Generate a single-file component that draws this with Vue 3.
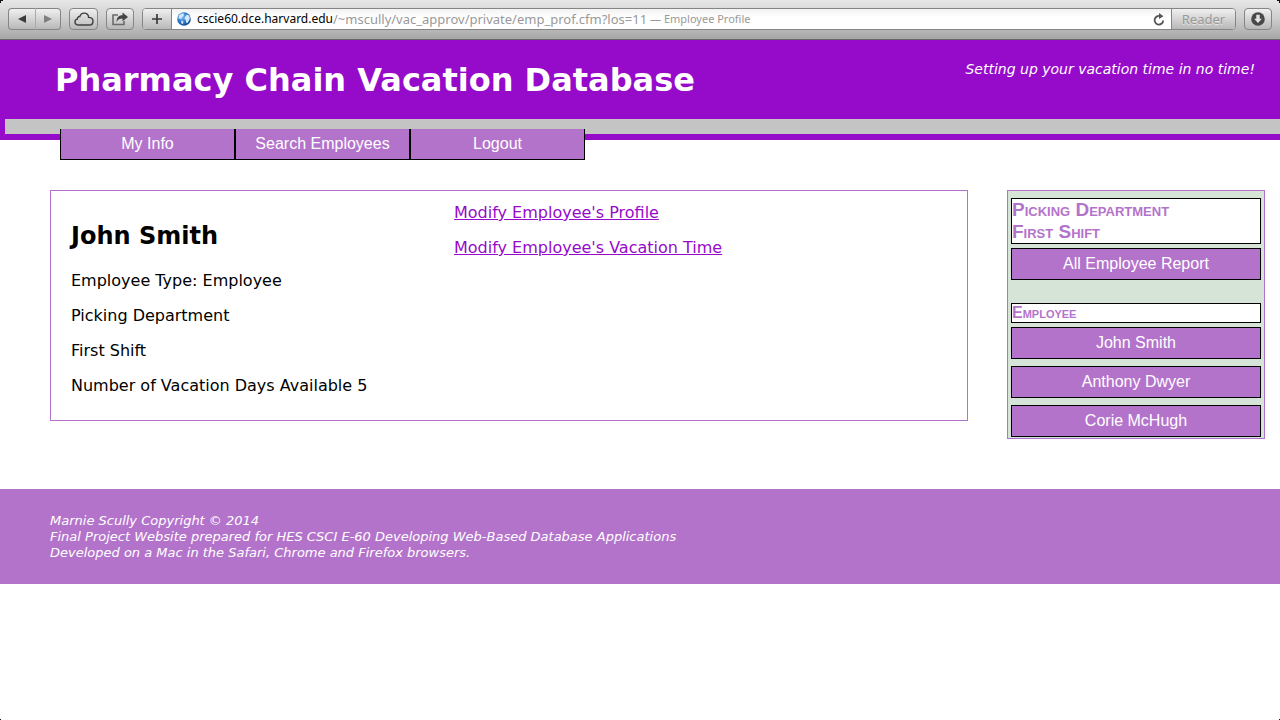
<script setup>
import { ref } from 'vue'

const path = ref('/~mscully/vac_approv/private/emp_prof.cfm?los=11')
const menu = ['My Info', 'Search Employees', 'Logout']
const facts = [
  'Employee Type: Employee',
  'Picking Department',
  'First Shift',
  'Number of Vacation Days Available 5',
]
const actions = ["Modify Employee's Profile", "Modify Employee's Vacation Time"]
const employees = ['John Smith', 'Anthony Dwyer', 'Corie McHugh']
</script>

<template>
  <div class="window">
    <div class="toolbar">
      <div class="group">
        <button class="tool half" type="button" aria-label="Back">
          <svg width="10" height="10" viewBox="0 0 10 10"><path d="M9 1v8L1 5z" fill="#3c3c3c" /></svg>
        </button>
        <button class="tool half" type="button" aria-label="Forward">
          <svg width="10" height="10" viewBox="0 0 10 10"><path d="M1 1v8l8-4z" fill="#7f7f7f" /></svg>
        </button>
      </div>
      <button class="tool single" type="button" aria-label="iCloud tabs">
        <svg width="20" height="14" viewBox="0 0 20 14">
          <path d="M5 13C2.600 13 1 11.800 1 9.900 1 8.200 2.200 7.200 3.400 7.100 3.300 5.400 4.400 4.400 5.800 4.600 6.500 2.400 8 1.100 10 1.100c2.600 0 4.500 1.800 4.600 4.300C17.200 5.400 19 7 19 9.200 19 11.500 17.500 13 15.300 13z" fill="none" stroke="#3f3f3f" stroke-width="1.400" />
        </svg>
      </button>
      <button class="tool narrow" type="button" aria-label="Share">
        <svg width="18" height="14" viewBox="0 0 18 14">
          <path d="M7 3H2v9.500h11V9" fill="none" stroke="#6b6b6b" stroke-width="1.600" />
          <path d="M5.500 10C5.500 5.800 7.500 3.300 11.500 3.300V.5L17 5l-5.500 4.300V6.500C8.500 6.500 6.700 7.500 5.500 10z" fill="#454545" />
        </svg>
      </button>
      <div class="location">
        <button class="tool add" type="button" aria-label="Add bookmark">
          <svg width="12" height="12" viewBox="0 0 12 12"><path d="M6 1v10M1 6h10" stroke="#3a3a3a" stroke-width="1.700" /></svg>
        </button>
        <svg class="globe" width="14" height="14" viewBox="0 0 14 14">
          <defs>
            <radialGradient id="sea" cx=".4" cy=".35" r=".7">
              <stop offset="0" stop-color="#7db9ef" /><stop offset=".6" stop-color="#2b72c4" /><stop offset="1" stop-color="#124487" />
            </radialGradient>
          </defs>
          <circle cx="7" cy="7" r="6.800" fill="url(#sea)" />
          <path d="M2 3.500 4.500 1.500 7 1.800 6.500 4 5 5 4.500 7 3 6.500 1.500 7zM8 5l2-2.500 2 1L13 6l-1 2.500L10.500 11 9 10.500 9 8 7.500 7zM4 8.500l2.500 1L6 12 4.500 11.500z" fill="#d3eafb" />
        </svg>
        <label class="domain" for="address">cscie60.dce.harvard.edu</label>
        <input id="address" v-model="path" class="address" type="text" spellcheck="false" />
        <span class="page-name">— Employee Profile</span>
        <button class="reload" type="button" aria-label="Reload">
          <svg width="12" height="13" viewBox="0 0 12 13">
            <path d="M10.200 7.500A4.300 4.300 0 1 1 7 3.100" fill="none" stroke="#555" stroke-width="1.800" />
            <path d="M6 0v6l4.500-2.800z" fill="#555" />
          </svg>
        </button>
        <button class="tool reader" type="button">Reader</button>
      </div>
      <button class="tool narrow" type="button" aria-label="Downloads">
        <svg width="14" height="14" viewBox="0 0 14 14">
          <circle cx="7" cy="7" r="6.800" fill="#484848" />
          <path d="M5.300 2.800h3.400v4h2.200L7 11 3.100 6.800h2.200z" fill="#e4e4e4" />
        </svg>
      </button>
    </div>

    <header class="banner">
      <div class="banner-text">
        <h1>Pharmacy Chain Vacation Database</h1>
        <p>Setting up your vacation time in no time!</p>
      </div>
      <div class="strip"></div>
    </header>
    <nav class="menu">
      <a v-for="item in menu" :key="item" href="#">{{ item }}</a>
    </nav>

    <main class="content">
      <section class="profile">
        <div>
          <h2>John Smith</h2>
          <p v-for="fact in facts" :key="fact">{{ fact }}</p>
        </div>
        <div class="actions">
          <p v-for="action in actions" :key="action"><a href="#">{{ action }}</a></p>
        </div>
      </section>
      <aside class="sidebar">
        <h3 class="label">Picking Department<br />First Shift</h3>
        <a class="entry report" href="#">All Employee Report</a>
        <h4 class="label minor">Employee</h4>
        <div class="people">
          <a v-for="name in employees" :key="name" class="entry" href="#">{{ name }}</a>
        </div>
      </aside>
    </main>

    <footer class="footer">
      Marnie Scully Copyright © 2014<br />
      Final Project Website prepared for HES CSCI E-60 Developing Web-Based Database Applications<br />
      Developed on a Mac in the Safari, Chrome and Firefox browsers.
    </footer>
  </div>
</template>

<style>
body {
  background: #fff;
}
</style>

<style scoped>
* {
  box-sizing: border-box;
}
.window {
  min-height: 100vh;
  background:
    radial-gradient(circle at 100% 0, transparent 3px, #111 3px) left bottom / 3px 3px no-repeat,
    radial-gradient(circle at 0 0, transparent 3px, #111 3px) right bottom / 3px 3px no-repeat;
  font: 16px/19px Verdana, "DejaVu Sans", sans-serif;
  color: #000;
}
h1, h2, h3, h4, p {
  margin: 0;
}
svg {
  display: block;
}
button {
  padding: 0;
  border: 0;
  background: none;
}
.toolbar {
  display: flex;
  align-items: flex-start;
  gap: 8px;
  height: 40px;
  padding: 8px 8px 0;
  background:
    radial-gradient(circle at 100% 100%, transparent 5px, #111 5px) left top / 5px 5px no-repeat,
    radial-gradient(circle at 0 100%, transparent 5px, #111 5px) right top / 5px 5px no-repeat,
    linear-gradient(#e6e6e6, #cfcfcf 45%, #a6a6a6);
  border-bottom: 1px solid #686868;
  font-family: "Lucida Grande", "Noto Sans", sans-serif;
}
.tool {
  display: flex;
  align-items: center;
  justify-content: center;
  height: 22px;
  border: 1px solid #858585;
  border-radius: 4px;
  background: linear-gradient(#f0f0f0, #b8b8b8);
}
.group {
  display: flex;
}
.half {
  width: 27px;
}
.half:first-child {
  border-right: 0;
  border-radius: 4px 0 0 4px;
}
.half:last-child {
  width: 26px;
  border-left-color: #aaa;
  border-radius: 0 4px 4px 0;
}
.single {
  width: 29px;
}
.narrow {
  width: 28px;
}
.location {
  display: flex;
  flex: 1;
  align-items: center;
  height: 22px;
  border: 1px solid #858585;
  border-radius: 4px;
  background: linear-gradient(#f2f2f2, #fff 40%);
}
.location .tool {
  height: 20px;
  border-width: 0;
}
.add {
  width: 29px;
  border-radius: 3px 0 0 3px;
}
.location .add {
  border-right-width: 1px;
}
.globe {
  margin: 0 6px 0 5px;
}
.domain {
  font-size: 12px;
  line-height: 20px;
}
.address {
  width: 317px;
  height: 20px;
  padding: 0;
  border: 0;
  outline: 0;
  background: none;
  font: 13px/20px "Lucida Grande", "Noto Sans", sans-serif;
  color: #999;
}
.page-name {
  flex: 1;
  font-size: 11px;
  line-height: 20px;
  color: #999;
}
.reload {
  margin-right: 6px;
}
.location .reader {
  width: 64px;
  border-left-width: 1px;
  border-radius: 0 3px 3px 0;
  font: 13px/18px "Lucida Grande", "Noto Sans", sans-serif;
  color: #999;
  text-shadow: 0 1px #e4e4e4;
}
.banner {
  padding: 15px 0 6px 5px;
  background: #960aca;
  color: #fff;
}
.banner-text {
  display: flex;
  justify-content: space-between;
  height: 64px;
  padding: 5px 25px 0 50px;
}
h1 {
  font-size: 32px;
  line-height: 40px;
}
.banner-text p {
  font-size: 14px;
  font-style: italic;
}
.strip {
  height: 15px;
  background: #c4c4c4;
}
.menu {
  display: flex;
  position: relative;
  margin: -11px 0 30px 60px;
}
.menu a {
  width: 175px;
  border: 1px solid #000;
  border-top: 0;
  background: #b473cb;
  color: #fff;
  font: 16px/30px Helvetica, "Liberation Sans", sans-serif;
  text-align: center;
  text-decoration: none;
}
.content {
  display: flex;
  align-items: flex-start;
  gap: 39px;
  padding: 0 15px 50px 50px;
}
.profile {
  display: grid;
  flex: 1;
  grid-template-columns: 383px 1fr;
  padding: 11px 20px 9px;
  border: 1px solid #b473cb;
}
h2 {
  margin: 20px 0;
  font-size: 24px;
  line-height: 29px;
}
.profile p {
  margin-bottom: 16px;
}
.actions {
  padding-top: 1px;
}
.actions a {
  color: #960aca;
}
.sidebar {
  width: 258px;
  padding: 7px 3px 1px;
  border: 1px solid #b473cb;
  background: #d5e4d6;
  font-family: Helvetica, "Liberation Sans", sans-serif;
}
.label {
  margin-bottom: 4px;
  border: 1px solid #000;
  background: #fff;
  color: #b473cb;
  font-size: 19px;
  line-height: 22px;
  font-variant: small-caps;
}
.minor {
  font-size: 16px;
  line-height: 18px;
}
.entry {
  display: block;
  border: 1px solid #000;
  background: #b473cb;
  color: #fff;
  line-height: 30px;
  text-align: center;
  text-decoration: none;
}
.report {
  margin-bottom: 23px;
}
.people {
  display: grid;
  gap: 7px;
}
.footer {
  padding: 24px 50px 23px;
  background: #b473cb;
  color: #fff;
  font-size: 13px;
  font-style: italic;
  line-height: 16px;
}
</style>
